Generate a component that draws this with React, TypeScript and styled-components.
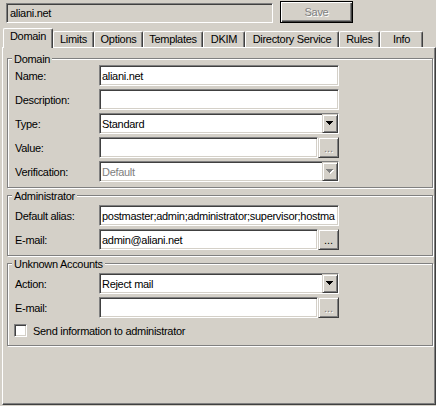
import React from "react";
import styled, { createGlobalStyle, css } from "styled-components";

const GlobalStyle = createGlobalStyle`
  html, body { margin: 0; padding: 0; background: #d4d0c8; }
  *, *::before, *::after { box-sizing: border-box; }
`;

const sunken = css`
  border: 1px solid;
  border-color: #808080 #ffffff #ffffff #808080;
  box-shadow: inset 1px 1px 0 #404040, inset -1px -1px 0 #d4d0c8;
`;

const raised = css`
  border: 1px solid;
  border-color: #d4d0c8 #404040 #404040 #d4d0c8;
  box-shadow: inset 1px 1px 0 #ffffff, inset -1px -1px 0 #808080;
`;

const disabledText = css`
  color: #808080;
  text-shadow: 1px 1px 0 #ffffff;
`;

const Window = styled.div`
  width: 436px;
  height: 406px;
  background: #d4d0c8;
  font-family: "Liberation Sans", Arial, sans-serif;
  font-size: 11px;
  letter-spacing: -0.3px;
  color: #000;
  overflow: hidden;
  display: flex;
  flex-direction: column;
`;

const TopBar = styled.div`
  display: flex;
  align-items: flex-start;
  height: 23px;
  padding: 1px 0 0 6px;
`;

const NameBox = styled.div`
  ${sunken};
  margin-top: 2px;
  width: 267px;
  height: 20px;
  background: #d4d0c8;
  padding: 0 3px;
  display: flex;
  align-items: center;
  white-space: nowrap;
`;

const SaveButton = styled.div`
  margin-left: 7px;
  width: 73px;
  height: 22px;
  border: 1px solid #000;
  box-shadow: inset 1px 1px 0 #ffffff, inset -1px -1px 0 #404040, inset -2px -2px 0 #808080;
  display: flex;
  align-items: center;
  justify-content: center;
  ${disabledText};
`;

const TabStrip = styled.div`
  display: flex;
  align-items: flex-end;
  height: 19px;
  margin-top: 5px;
  padding-left: 3px;
`;

const Tab = styled.div<{ $w: number; $active?: boolean }>`
  width: ${(p) => p.$w}px;
  height: ${(p) => (p.$active ? 20 : 16)}px;
  margin-bottom: ${(p) => (p.$active ? -1 : 0)}px;
  position: relative;
  z-index: ${(p) => (p.$active ? 1 : 0)};
  background: #d4d0c8;
  border-left: 1px solid #ffffff;
  border-top: 1px solid #ffffff;
  border-right: 1px solid #404040;
  border-radius: 2px 2px 0 0;
  box-shadow: inset -1px 0 0 #808080;
  text-align: center;
  line-height: 15px;
  white-space: nowrap;
  flex: none;
`;

const Panel = styled.div`
  margin-left: 2px;
  width: 434px;
  height: 358px;
  border-top: 1px solid #ffffff;
  border-left: 1px solid #ffffff;
  border-right: 1px solid #404040;
  border-bottom: 1px solid #404040;
  box-shadow: inset -1px -1px 0 #808080;
  padding: 10px 0 0 4px;
  display: flex;
  flex-direction: column;
  gap: 7px;
`;

const GroupBox = styled.div<{ $pt: number; $pb: number }>`
  position: relative;
  width: 426px;
  border: 1px solid #808080;
  box-shadow: 1px 1px 0 #ffffff, inset 1px 1px 0 #ffffff;
  padding: ${(p) => p.$pt}px 0 ${(p) => p.$pb}px 7px;
  display: flex;
  flex-direction: column;
`;

const Caption = styled.span`
  position: absolute;
  top: -6px;
  left: 4px;
  padding: 0 2px;
  background: #d4d0c8;
  line-height: 13px;
  white-space: nowrap;
`;

const Fields = styled.div`
  display: flex;
  flex-direction: column;
  gap: 3px;
`;

const Row = styled.div`
  display: flex;
  align-items: center;
  height: 21px;
`;

const Label = styled.div`
  width: 84px;
  flex: none;
  white-space: nowrap;
`;

const TextField = styled.div<{ $w?: number }>`
  ${sunken};
  ${(p) => (p.$w ? `width: ${p.$w}px;` : "flex: 1;")}
  height: 21px;
  background: #ffffff;
  padding: 0 2px;
  display: flex;
  align-items: center;
  white-space: nowrap;
  overflow: hidden;
`;

const Compound = styled.div`
  display: flex;
  width: 240px;
`;

const EllipsisButton = styled.div<{ $disabled?: boolean }>`
  ${raised};
  width: 21px;
  height: 21px;
  flex: none;
  display: flex;
  align-items: center;
  justify-content: center;
  padding-top: 1px;
  letter-spacing: 0;
  ${(p) => (p.$disabled ? disabledText : "color: #000;")}
`;

const Combo = styled.div`
  ${sunken};
  width: 240px;
  height: 21px;
  background: #ffffff;
  display: flex;
  align-items: stretch;
`;

const ComboText = styled.div<{ $disabled?: boolean }>`
  flex: 1;
  padding: 0 2px;
  display: flex;
  align-items: center;
  white-space: nowrap;
  color: ${(p) => (p.$disabled ? "#808080" : "#000")};
`;

const DropButton = styled.div`
  ${raised};
  width: 16px;
  flex: none;
  display: flex;
  align-items: center;
  justify-content: center;
  background: #d4d0c8;
`;

const CheckRow = styled.label`
  display: flex;
  align-items: center;
  height: 13px;
  margin-top: 6px;
  margin-left: -1px;
`;

const CheckBox = styled.span`
  ${sunken};
  width: 13px;
  height: 13px;
  background: #ffffff;
  flex: none;
`;

const CheckText = styled.span`
  margin-left: 6px;
  white-space: nowrap;
`;

const Arrow: React.FC<{ disabled?: boolean }> = ({ disabled }) => (
  <svg width="8" height="5" viewBox="0 0 8 5" shapeRendering="crispEdges">
    {disabled && (
      <path transform="translate(1 1)" d="M0 0h7v1h-1v1h-1v1h-1v1h-1v-1h-1v-1h-1v-1h-1z" fill="#ffffff" />
    )}
    <path d="M0 0h7v1h-1v1h-1v1h-1v1h-1v-1h-1v-1h-1v-1h-1z" fill={disabled ? "#808080" : "#000000"} />
  </svg>
);

const tabs = [
  { label: "Domain", w: 50 },
  { label: "Limits", w: 41 },
  { label: "Options", w: 49 },
  { label: "Templates", w: 60 },
  { label: "DKIM", w: 42 },
  { label: "Directory Service", w: 94 },
  { label: "Rules", w: 41 },
  { label: "Info", w: 43 },
];

export default function App() {
  return (
    <Window>
      <GlobalStyle />
      <TopBar>
        <NameBox>aliani.net</NameBox>
        <SaveButton>Save</SaveButton>
      </TopBar>
      <TabStrip>
        {tabs.map((t, i) => (
          <Tab key={t.label} $w={t.w} $active={i === 0}>
            {t.label}
          </Tab>
        ))}
      </TabStrip>
      <Panel>
        <GroupBox $pt={6} $pb={5}>
          <Caption>Domain</Caption>
          <Fields>
            <Row>
              <Label>Name:</Label>
              <TextField $w={240}>aliani.net</TextField>
            </Row>
            <Row>
              <Label>Description:</Label>
              <TextField $w={240} />
            </Row>
            <Row>
              <Label>Type:</Label>
              <Combo>
                <ComboText>Standard</ComboText>
                <DropButton>
                  <Arrow />
                </DropButton>
              </Combo>
            </Row>
            <Row>
              <Label>Value:</Label>
              <Compound>
                <TextField />
                <EllipsisButton $disabled>...</EllipsisButton>
              </Compound>
            </Row>
            <Row>
              <Label>Verification:</Label>
              <Combo>
                <ComboText $disabled>Default</ComboText>
                <DropButton>
                  <Arrow disabled />
                </DropButton>
              </Combo>
            </Row>
          </Fields>
        </GroupBox>
        <GroupBox $pt={9} $pb={5}>
          <Caption>Administrator</Caption>
          <Fields>
            <Row>
              <Label>Default alias:</Label>
              <TextField $w={240}>postmaster;admin;administrator;supervisor;hostma</TextField>
            </Row>
            <Row>
              <Label>E-mail:</Label>
              <Compound>
                <TextField>admin@aliani.net</TextField>
                <EllipsisButton>...</EllipsisButton>
              </Compound>
            </Row>
          </Fields>
        </GroupBox>
        <GroupBox $pt={9} $pb={8}>
          <Caption>Unknown Accounts</Caption>
          <Fields>
            <Row>
              <Label>Action:</Label>
              <Combo>
                <ComboText>Reject mail</ComboText>
                <DropButton>
                  <Arrow />
                </DropButton>
              </Combo>
            </Row>
            <Row>
              <Label>E-mail:</Label>
              <Compound>
                <TextField />
                <EllipsisButton $disabled>...</EllipsisButton>
              </Compound>
            </Row>
          </Fields>
          <CheckRow>
            <CheckBox />
            <CheckText>Send information to administrator</CheckText>
          </CheckRow>
        </GroupBox>
      </Panel>
    </Window>
  );
}
